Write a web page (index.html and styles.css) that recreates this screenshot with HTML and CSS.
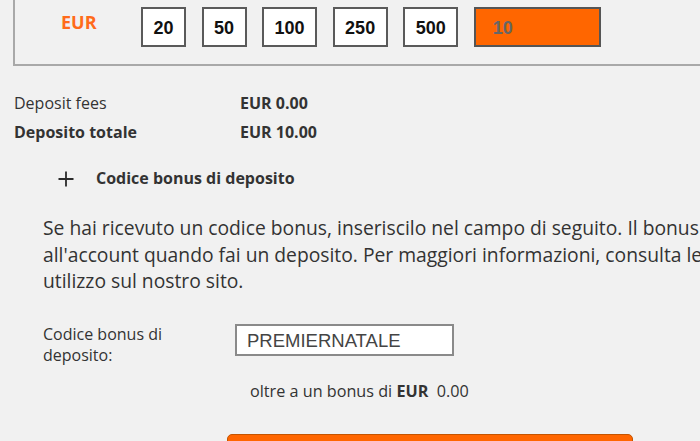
FILE: index.html
```html
<!DOCTYPE html>
<html lang="it">
<head>
    <meta charset="UTF-8">
    <title>Deposito</title>
    <link rel="stylesheet" href="styles.css">
</head>
<body>
    <main class="page">
        <section class="amounts">
            <span class="currency">EUR</span>
            <button class="amount">20</button>
            <button class="amount">50</button>
            <button class="amount">100</button>
            <button class="amount">250</button>
            <button class="amount">500</button>
            <input class="amountInput" type="text" value="10">
        </section>

        <dl class="totals">
            <dt>Deposit fees</dt>
            <dd>EUR 0.00</dd>
            <dt class="strong">Deposito totale</dt>
            <dd>EUR 10.00</dd>
        </dl>

        <div class="bonusToggle">
            <svg class="plus" width="16" height="16" viewBox="0 0 16 16">
                <path d="M8 0.5v15M0.5 8h15" stroke="#2b2b2b" stroke-width="1.8" fill="none"/>
            </svg>
            <span>Codice bonus di deposito</span>
        </div>

        <p class="bonusInfo">Se hai ricevuto un codice bonus, inseriscilo nel campo di seguito. Il bonus verrà aggiunto all'account quando fai un deposito. Per maggiori informazioni, consulta le condizioni di utilizzo sul nostro sito.</p>

        <form class="bonusForm">
            <div class="bonusRow">
                <label for="bonusCode">Codice bonus di deposito:</label>
                <input id="bonusCode" class="bonusInput" type="text" value="PREMIERNATALE">
            </div>
            <p class="bonusNote">oltre a un bonus di <b>EUR</b>&nbsp; 0.00</p>
            <button class="depositButton" type="submit"></button>
        </form>
    </main>
</body>
</html>
```

FILE: styles.css
```css
body {
    margin: 0;
    overflow: hidden;
    background-color: #f1f1f1;
    color: #333;
    font-family: "Open Sans", "Liberation Sans", sans-serif;
}

.page {
    width: 860px;
}

.amounts {
    display: flex;
    align-items: flex-start;
    margin: -30px 0 0 13px;
    padding: 35px 0 17px 46px;
    border: 2px solid #a9a9a9;
}
.currency {
    width: 80px;
    margin-top: 3px;
    color: #ff6b1a;
    font-size: 18px;
    font-weight: bold;
    line-height: 24px;
}
.amount {
    height: 40px;
    margin: 0 15.5px 0 0;
    padding: 3px 10.5px 0;
    border: 2px solid #5a5a5a;
    background-color: #fff;
    color: #111;
    font-family: "Liberation Sans", Arial, sans-serif;
    font-size: 18px;
    font-weight: bold;
    line-height: 33px;
    box-sizing: border-box;
}
.amountInput {
    width: 127px;
    height: 40px;
    padding: 3px 0 0 17px;
    border: 2px solid #555;
    background-color: #ff6600;
    color: #666;
    font-family: "Liberation Sans", Arial, sans-serif;
    font-size: 18px;
    font-weight: bold;
    box-sizing: border-box;
}

.totals {
    display: grid;
    grid-template-columns: 226px auto;
    margin: 23px 0 0 14px;
    font-size: 16px;
    line-height: 29px;
}
.totals dt, .totals dd {
    margin: 0;
}
.totals dd, .totals .strong {
    font-weight: bold;
}

.bonusToggle {
    display: flex;
    align-items: center;
    margin: 17px 0 0 58px;
    font-size: 16px;
    font-weight: bold;
    line-height: 29px;
}
.plus {
    margin-right: 22px;
}

.bonusInfo {
    width: 830px;
    margin: 22px 0 0 43px;
    font-size: 19.3px;
    line-height: 26.5px;
}

.bonusForm {
    margin: 29px 0 0 43px;
}
.bonusRow {
    display: flex;
    align-items: flex-start;
}
.bonusRow label {
    width: 150px;
    margin-right: 42px;
    font-size: 16px;
    line-height: 21px;
}
.bonusInput {
    width: 219px;
    height: 32px;
    padding: 2px 0 0 10px;
    border: 2px solid #8a8a8a;
    background-color: #fff;
    color: #444;
    font-family: "Liberation Sans", Arial, sans-serif;
    font-size: 18.5px;
    box-sizing: border-box;
}
.bonusNote {
    margin: 15px 0 0 207px;
    font-size: 16.2px;
    line-height: 21px;
}
.depositButton {
    display: block;
    width: 406px;
    height: 46px;
    margin: 32px 0 0 184px;
    border: 1px solid #c45400;
    border-radius: 5px;
    background-color: #ff6600;
}
```
